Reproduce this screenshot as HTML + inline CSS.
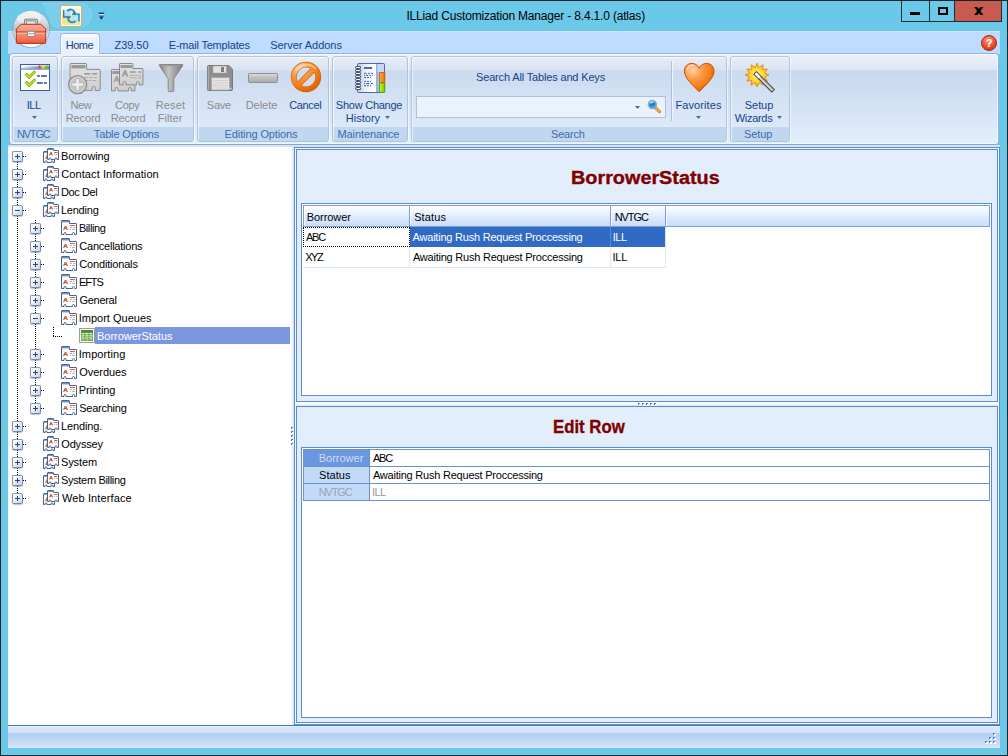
<!DOCTYPE html>
<html><head><meta charset="utf-8"><title>ILLiad Customization Manager</title>
<style>
html,body{margin:0;padding:0}
body{width:1008px;height:756px;overflow:hidden;position:relative;background:#6ac9e8;font-family:"Liberation Sans", sans-serif;font-size:11px}
div,span,svg{box-sizing:border-box}
svg{position:absolute;overflow:visible}
</style></head><body>
<div style="position:absolute;left:0px;top:0px;width:1008px;height:1px;background:#1d2326"></div>
<div style="position:absolute;left:0px;top:0px;width:1px;height:756px;background:#1d2326"></div>
<div style="position:absolute;left:0px;top:755px;width:1008px;height:1px;background:#1d2326"></div>
<div style="position:absolute;left:1007px;top:0px;width:1px;height:756px;background:#1d2326"></div>
<span style="position:absolute;left:406.4px;top:8px;height:16px;line-height:16px;font-size:12px;font-weight:normal;color:#000;white-space:pre;letter-spacing:-0.178px;">ILLiad Customization Manager - 8.4.1.0 (atlas)</span>
<div style="position:absolute;left:901px;top:1px;width:101px;height:21px;border:1px solid #1e2b33;border-top:none;background:#6ac9e8"></div>
<div style="position:absolute;left:955px;top:1px;width:46px;height:20px;background:#c75b50"></div>
<div style="position:absolute;left:929px;top:1px;width:1px;height:20px;background:#1e2b33"></div>
<div style="position:absolute;left:954px;top:1px;width:1px;height:20px;background:#1e2b33"></div>
<div style="position:absolute;left:910px;top:12px;width:10px;height:3px;background:#000"></div>
<div style="position:absolute;left:938px;top:7px;width:10px;height:8px;border:2px solid #000"></div>
<svg style="left:973px;top:7px;overflow:hidden" width="12" height="8" viewBox="0 0 12 8"><path d="M2 -1 L9.600 9 M9.600 -1 L2 9" stroke="#000" stroke-width="2.500" fill="none"/></svg>
<div style="position:absolute;left:8px;top:31px;width:992px;height:23px;background:#bfdbff"></div>
<span style="position:absolute;left:114.469px;top:38px;height:15px;line-height:15px;font-size:11px;font-weight:normal;color:#15428b;white-space:pre;letter-spacing:-0.0444px;">Z39.50</span>
<span style="position:absolute;left:168.768px;top:38px;height:15px;line-height:15px;font-size:11px;font-weight:normal;color:#15428b;white-space:pre;letter-spacing:-0.2013px;">E-mail Templates</span>
<span style="position:absolute;left:270.204px;top:38px;height:15px;line-height:15px;font-size:11px;font-weight:normal;color:#15428b;white-space:pre;letter-spacing:-0.0366px;">Server Addons</span>
<div style="position:absolute;left:981px;top:35px;width:16px;height:16px;border-radius:50%;background:radial-gradient(circle at 45% 30%,#ff9a7a 0%,#ee4a2a 55%,#c2230f 100%);border:1px solid #b3200e"></div>
<span style="position:absolute;left:989px;top:36px;height:15px;line-height:15px;font-size:11px;font-weight:bold;color:#fff;white-space:pre;transform:translateX(-50%);transform-origin:center center;">?</span>
<div style="position:absolute;left:9px;top:53px;width:990px;height:92px;border:1px solid #8fb1e4;border-bottom-color:#94a4bc;border-radius:4px;background:linear-gradient(#edf2fa 0px,#dbe5f3 16px,#c7d8ed 17px,#e1eefc 89px,#e2fbfd 89px,#e2fbfd 90px);box-shadow:inset 1px 1px 0 rgba(255,255,255,.7),inset -1px 0 0 rgba(255,255,255,.7)"></div>
<div style="position:absolute;left:61px;top:53px;width:38px;height:2px;background:#ecf1fa"></div>
<div style="position:absolute;left:60px;top:33px;width:40px;height:20px;border:1px solid #9bbdee;border-bottom:none;border-radius:4px 4px 0 0;background:linear-gradient(#ffffff 0px,#edf3fc 4px,#e8eff9 12px,#ecf1fa 20px);box-shadow:inset 1px 1px 0 rgba(255,255,255,.9),inset -1px 0 0 rgba(255,255,255,.9)"></div>
<div style="position:absolute;left:59px;top:53px;width:1px;height:1px;background:#a9c6f0"></div>
<div style="position:absolute;left:100px;top:53px;width:1px;height:1px;background:#a9c6f0"></div>
<div style="position:absolute;left:8px;top:31px;width:992px;height:1px;background:#d2e5ff"></div>
<span style="position:absolute;left:65.873px;top:38px;height:15px;line-height:15px;font-size:11px;font-weight:normal;color:#15428b;white-space:pre;letter-spacing:-0.5462px;">Home</span>
<div style="position:absolute;left:8px;top:145px;width:992px;height:2px;background:#d6e3f4"></div>
<div style="position:absolute;left:12px;top:56px;width:46px;height:86px;border:1px solid #b1c4dc;border-radius:3px;background:linear-gradient(#e6edf8 0px,#d9e3f2 13px,#cbdaee 14px,#dce9f9 70px,#c1d7ef 70px,#c1d7ef 84px);box-shadow:inset 1px 1px 0 rgba(255,255,255,.6), 1px 0 0 rgba(255,255,255,.55)"></div>
<div style="position:absolute;left:61px;top:56px;width:133px;height:86px;border:1px solid #b1c4dc;border-radius:3px;background:linear-gradient(#e6edf8 0px,#d9e3f2 13px,#cbdaee 14px,#dce9f9 70px,#c1d7ef 70px,#c1d7ef 84px);box-shadow:inset 1px 1px 0 rgba(255,255,255,.6), 1px 0 0 rgba(255,255,255,.55)"></div>
<div style="position:absolute;left:197px;top:56px;width:132px;height:86px;border:1px solid #b1c4dc;border-radius:3px;background:linear-gradient(#e6edf8 0px,#d9e3f2 13px,#cbdaee 14px,#dce9f9 70px,#c1d7ef 70px,#c1d7ef 84px);box-shadow:inset 1px 1px 0 rgba(255,255,255,.6), 1px 0 0 rgba(255,255,255,.55)"></div>
<div style="position:absolute;left:332px;top:56px;width:76px;height:86px;border:1px solid #b1c4dc;border-radius:3px;background:linear-gradient(#e6edf8 0px,#d9e3f2 13px,#cbdaee 14px,#dce9f9 70px,#c1d7ef 70px,#c1d7ef 84px);box-shadow:inset 1px 1px 0 rgba(255,255,255,.6), 1px 0 0 rgba(255,255,255,.55)"></div>
<div style="position:absolute;left:411px;top:56px;width:316px;height:86px;border:1px solid #b1c4dc;border-radius:3px;background:linear-gradient(#e6edf8 0px,#d9e3f2 13px,#cbdaee 14px,#dce9f9 70px,#c1d7ef 70px,#c1d7ef 84px);box-shadow:inset 1px 1px 0 rgba(255,255,255,.6), 1px 0 0 rgba(255,255,255,.55)"></div>
<div style="position:absolute;left:730px;top:56px;width:60px;height:86px;border:1px solid #b1c4dc;border-radius:3px;background:linear-gradient(#e6edf8 0px,#d9e3f2 13px,#cbdaee 14px,#dce9f9 70px,#c1d7ef 70px,#c1d7ef 84px);box-shadow:inset 1px 1px 0 rgba(255,255,255,.6), 1px 0 0 rgba(255,255,255,.55)"></div>
<span style="position:absolute;left:16.886px;top:127px;height:15px;line-height:15px;font-size:11px;font-weight:normal;color:#3e6aaa;white-space:pre;letter-spacing:-1.1408px;">NVTGC</span>
<span style="position:absolute;left:93.836px;top:127px;height:15px;line-height:15px;font-size:11px;font-weight:normal;color:#3e6aaa;white-space:pre;letter-spacing:-0.1463px;">Table Options</span>
<span style="position:absolute;left:224.595px;top:127px;height:15px;line-height:15px;font-size:11px;font-weight:normal;color:#3e6aaa;white-space:pre;letter-spacing:-0.1128px;">Editing Options</span>
<span style="position:absolute;left:337.557px;top:127px;height:15px;line-height:15px;font-size:11px;font-weight:normal;color:#3e6aaa;white-space:pre;letter-spacing:-0.1091px;">Maintenance</span>
<span style="position:absolute;left:551.113px;top:127px;height:15px;line-height:15px;font-size:11px;font-weight:normal;color:#3e6aaa;white-space:pre;letter-spacing:-0.2298px;">Search</span>
<span style="position:absolute;left:744.058px;top:127px;height:15px;line-height:15px;font-size:11px;font-weight:normal;color:#3e6aaa;white-space:pre;letter-spacing:-0.0791px;">Setup</span>
<span style="position:absolute;left:26.874px;top:98px;height:15px;line-height:15px;font-size:11px;font-weight:normal;color:#15428b;white-space:pre;letter-spacing:-0.5561px;">ILL</span>
<svg style="left:32px;top:116px" width="5" height="3" viewBox="0 0 5 3"><path d="M0 0h5l-2.5 3z" fill="#46699e"/></svg>
<span style="position:absolute;left:70.382px;top:98px;height:15px;line-height:15px;font-size:11px;font-weight:normal;color:#8d8b8a;white-space:pre;letter-spacing:-0.2925px;">New</span>
<span style="position:absolute;left:65.712px;top:111px;height:15px;line-height:15px;font-size:11px;font-weight:normal;color:#8d8b8a;white-space:pre;letter-spacing:-0.1203px;">Record</span>
<span style="position:absolute;left:115.120px;top:98px;height:15px;line-height:15px;font-size:11px;font-weight:normal;color:#8d8b8a;white-space:pre;letter-spacing:-0.3515px;">Copy</span>
<span style="position:absolute;left:110.746px;top:111px;height:15px;line-height:15px;font-size:11px;font-weight:normal;color:#8d8b8a;white-space:pre;letter-spacing:-0.1272px;">Record</span>
<span style="position:absolute;left:155.685px;top:98px;height:15px;line-height:15px;font-size:11px;font-weight:normal;color:#8d8b8a;white-space:pre;letter-spacing:0.1371px;">Reset</span>
<span style="position:absolute;left:157.712px;top:111px;height:15px;line-height:15px;font-size:11px;font-weight:normal;color:#8d8b8a;white-space:pre;letter-spacing:0.0456px;">Filter</span>
<span style="position:absolute;left:206.815px;top:98px;height:15px;line-height:15px;font-size:11px;font-weight:normal;color:#8d8b8a;white-space:pre;letter-spacing:-0.2351px;">Save</span>
<span style="position:absolute;left:245.712px;top:98px;height:15px;line-height:15px;font-size:11px;font-weight:normal;color:#8d8b8a;white-space:pre;letter-spacing:-0.0391px;">Delete</span>
<span style="position:absolute;left:289.179px;top:98px;height:15px;line-height:15px;font-size:11px;font-weight:normal;color:#15428b;white-space:pre;letter-spacing:-0.3343px;">Cancel</span>
<span style="position:absolute;left:335.833px;top:98px;height:15px;line-height:15px;font-size:11px;font-weight:normal;color:#15428b;white-space:pre;letter-spacing:-0.2446px;">Show Change</span>
<span style="position:absolute;left:345.700px;top:111px;height:15px;line-height:15px;font-size:11px;font-weight:normal;color:#15428b;white-space:pre;letter-spacing:0.0344px;">History</span>
<svg style="left:385px;top:116px" width="5" height="3" viewBox="0 0 5 3"><path d="M0 0h5l-2.5 3z" fill="#46699e"/></svg>
<span style="position:absolute;left:475.988px;top:70px;height:15px;line-height:15px;font-size:11px;font-weight:normal;color:#15428b;white-space:pre;letter-spacing:-0.1548px;">Search All Tables and Keys</span>
<span style="position:absolute;left:675.536px;top:98px;height:15px;line-height:15px;font-size:11px;font-weight:normal;color:#15428b;white-space:pre;letter-spacing:0.0773px;">Favorites</span>
<svg style="left:696px;top:116px" width="5" height="3" viewBox="0 0 5 3"><path d="M0 0h5l-2.5 3z" fill="#46699e"/></svg>
<span style="position:absolute;left:744.823px;top:98px;height:15px;line-height:15px;font-size:11px;font-weight:normal;color:#15428b;white-space:pre;letter-spacing:-0.0676px;">Setup</span>
<span style="position:absolute;left:734.737px;top:111px;height:15px;line-height:15px;font-size:11px;font-weight:normal;color:#15428b;white-space:pre;letter-spacing:-0.2982px;">Wizards</span>
<svg style="left:777px;top:116px" width="5" height="3" viewBox="0 0 5 3"><path d="M0 0h5l-2.5 3z" fill="#46699e"/></svg>
<div style="position:absolute;left:416px;top:96px;width:250px;height:22px;border:1px solid #abc1de;background:#eaf2fb"></div>
<svg style="left:635px;top:106px" width="5" height="3" viewBox="0 0 5 3"><path d="M0 0h5l-2.5 3z" fill="#46699e"/></svg>
<div style="position:absolute;left:636px;top:109px;width:3px;height:1px;background:rgba(255,255,255,.9)"></div>
<div style="position:absolute;left:671px;top:61px;width:1px;height:60px;background:#a9c0e0"></div>
<div style="position:absolute;left:672px;top:61px;width:1px;height:60px;background:#eef4fc"></div>
<div style="position:absolute;left:8px;top:147px;width:284px;height:578px;background:#fff"></div>
<div style="position:absolute;left:17px;top:162px;width:1px;height:331px;background:repeating-linear-gradient(#000 0 1px,transparent 1px 2px)"></div>
<div style="position:absolute;left:35px;top:220px;width:1px;height:183px;background:repeating-linear-gradient(#000 0 1px,transparent 1px 2px)"></div>
<div style="position:absolute;left:53px;top:327px;width:1px;height:10px;background:repeating-linear-gradient(#000 0 1px,transparent 1px 2px)"></div>
<div style="position:absolute;left:53px;top:336px;width:9px;height:1px;background:repeating-linear-gradient(90deg,#000 0 1px,transparent 1px 2px)"></div>
<div style="position:absolute;left:23px;top:156px;width:4px;height:1px;background:repeating-linear-gradient(90deg,#000 0 1px,transparent 1px 2px)"></div>
<div style="position:absolute;left:12px;top:151px;width:11px;height:11px;border:1px solid #8395b3;border-right-color:#74879f;border-bottom-color:#74879f;border-radius:2px;background:linear-gradient(135deg,#ffffff 15%,#e4eaf6 55%,#c6d2ea 100%);box-shadow:0 1px 1px rgba(110,130,165,.45)"></div>
<div style="position:absolute;left:15px;top:156px;width:5px;height:1px;background:#2f4770"></div>
<div style="position:absolute;left:17px;top:154px;width:1px;height:5px;background:#2f4770"></div>
<svg style="left:43px;top:147px" width="16" height="17" viewBox="0 0 16 17"><use href="#icfolders"/></svg>
<span style="position:absolute;left:60.937px;top:149px;height:15px;line-height:15px;font-size:11px;font-weight:normal;color:#000;white-space:pre;letter-spacing:-0.0877px;">Borrowing</span>
<div style="position:absolute;left:23px;top:174px;width:4px;height:1px;background:repeating-linear-gradient(90deg,#000 0 1px,transparent 1px 2px)"></div>
<div style="position:absolute;left:12px;top:169px;width:11px;height:11px;border:1px solid #8395b3;border-right-color:#74879f;border-bottom-color:#74879f;border-radius:2px;background:linear-gradient(135deg,#ffffff 15%,#e4eaf6 55%,#c6d2ea 100%);box-shadow:0 1px 1px rgba(110,130,165,.45)"></div>
<div style="position:absolute;left:15px;top:174px;width:5px;height:1px;background:#2f4770"></div>
<div style="position:absolute;left:17px;top:172px;width:1px;height:5px;background:#2f4770"></div>
<svg style="left:43px;top:165px" width="16" height="17" viewBox="0 0 16 17"><use href="#icfolders"/></svg>
<span style="position:absolute;left:61.327px;top:167px;height:15px;line-height:15px;font-size:11px;font-weight:normal;color:#000;white-space:pre;letter-spacing:0.0770px;">Contact Information</span>
<div style="position:absolute;left:23px;top:192px;width:4px;height:1px;background:repeating-linear-gradient(90deg,#000 0 1px,transparent 1px 2px)"></div>
<div style="position:absolute;left:12px;top:187px;width:11px;height:11px;border:1px solid #8395b3;border-right-color:#74879f;border-bottom-color:#74879f;border-radius:2px;background:linear-gradient(135deg,#ffffff 15%,#e4eaf6 55%,#c6d2ea 100%);box-shadow:0 1px 1px rgba(110,130,165,.45)"></div>
<div style="position:absolute;left:15px;top:192px;width:5px;height:1px;background:#2f4770"></div>
<div style="position:absolute;left:17px;top:190px;width:1px;height:5px;background:#2f4770"></div>
<svg style="left:43px;top:183px" width="16" height="17" viewBox="0 0 16 17"><use href="#icfolders"/></svg>
<span style="position:absolute;left:60.998px;top:185px;height:15px;line-height:15px;font-size:11px;font-weight:normal;color:#000;white-space:pre;letter-spacing:-0.3961px;">Doc Del</span>
<div style="position:absolute;left:23px;top:210px;width:4px;height:1px;background:repeating-linear-gradient(90deg,#000 0 1px,transparent 1px 2px)"></div>
<div style="position:absolute;left:12px;top:205px;width:11px;height:11px;border:1px solid #8395b3;border-right-color:#74879f;border-bottom-color:#74879f;border-radius:2px;background:linear-gradient(135deg,#ffffff 15%,#e4eaf6 55%,#c6d2ea 100%);box-shadow:0 1px 1px rgba(110,130,165,.45)"></div>
<div style="position:absolute;left:15px;top:210px;width:5px;height:1px;background:#2f4770"></div>
<svg style="left:43px;top:201px" width="16" height="17" viewBox="0 0 16 17"><use href="#icfolders"/></svg>
<span style="position:absolute;left:60.914px;top:203px;height:15px;line-height:15px;font-size:11px;font-weight:normal;color:#000;white-space:pre;letter-spacing:-0.2137px;">Lending</span>
<div style="position:absolute;left:41px;top:228px;width:4px;height:1px;background:repeating-linear-gradient(90deg,#000 0 1px,transparent 1px 2px)"></div>
<div style="position:absolute;left:30px;top:223px;width:11px;height:11px;border:1px solid #8395b3;border-right-color:#74879f;border-bottom-color:#74879f;border-radius:2px;background:linear-gradient(135deg,#ffffff 15%,#e4eaf6 55%,#c6d2ea 100%);box-shadow:0 1px 1px rgba(110,130,165,.45)"></div>
<div style="position:absolute;left:33px;top:228px;width:5px;height:1px;background:#2f4770"></div>
<div style="position:absolute;left:35px;top:226px;width:1px;height:5px;background:#2f4770"></div>
<svg style="left:61px;top:219px" width="16" height="17" viewBox="0 0 16 17"><use href="#icfolder"/></svg>
<span style="position:absolute;left:78.937px;top:221px;height:15px;line-height:15px;font-size:11px;font-weight:normal;color:#000;white-space:pre;letter-spacing:-0.4169px;">Billing</span>
<div style="position:absolute;left:41px;top:246px;width:4px;height:1px;background:repeating-linear-gradient(90deg,#000 0 1px,transparent 1px 2px)"></div>
<div style="position:absolute;left:30px;top:241px;width:11px;height:11px;border:1px solid #8395b3;border-right-color:#74879f;border-bottom-color:#74879f;border-radius:2px;background:linear-gradient(135deg,#ffffff 15%,#e4eaf6 55%,#c6d2ea 100%);box-shadow:0 1px 1px rgba(110,130,165,.45)"></div>
<div style="position:absolute;left:33px;top:246px;width:5px;height:1px;background:#2f4770"></div>
<div style="position:absolute;left:35px;top:244px;width:1px;height:5px;background:#2f4770"></div>
<svg style="left:61px;top:237px" width="16" height="17" viewBox="0 0 16 17"><use href="#icfolder"/></svg>
<span style="position:absolute;left:79.324px;top:239px;height:15px;line-height:15px;font-size:11px;font-weight:normal;color:#000;white-space:pre;letter-spacing:-0.2333px;">Cancellations</span>
<div style="position:absolute;left:41px;top:264px;width:4px;height:1px;background:repeating-linear-gradient(90deg,#000 0 1px,transparent 1px 2px)"></div>
<div style="position:absolute;left:30px;top:259px;width:11px;height:11px;border:1px solid #8395b3;border-right-color:#74879f;border-bottom-color:#74879f;border-radius:2px;background:linear-gradient(135deg,#ffffff 15%,#e4eaf6 55%,#c6d2ea 100%);box-shadow:0 1px 1px rgba(110,130,165,.45)"></div>
<div style="position:absolute;left:33px;top:264px;width:5px;height:1px;background:#2f4770"></div>
<div style="position:absolute;left:35px;top:262px;width:1px;height:5px;background:#2f4770"></div>
<svg style="left:61px;top:255px" width="16" height="17" viewBox="0 0 16 17"><use href="#icfolder"/></svg>
<span style="position:absolute;left:79.333px;top:257px;height:15px;line-height:15px;font-size:11px;font-weight:normal;color:#000;white-space:pre;letter-spacing:-0.1800px;">Conditionals</span>
<div style="position:absolute;left:41px;top:282px;width:4px;height:1px;background:repeating-linear-gradient(90deg,#000 0 1px,transparent 1px 2px)"></div>
<div style="position:absolute;left:30px;top:277px;width:11px;height:11px;border:1px solid #8395b3;border-right-color:#74879f;border-bottom-color:#74879f;border-radius:2px;background:linear-gradient(135deg,#ffffff 15%,#e4eaf6 55%,#c6d2ea 100%);box-shadow:0 1px 1px rgba(110,130,165,.45)"></div>
<div style="position:absolute;left:33px;top:282px;width:5px;height:1px;background:#2f4770"></div>
<div style="position:absolute;left:35px;top:280px;width:1px;height:5px;background:#2f4770"></div>
<svg style="left:61px;top:273px" width="16" height="17" viewBox="0 0 16 17"><use href="#icfolder"/></svg>
<span style="position:absolute;left:78.937px;top:275px;height:15px;line-height:15px;font-size:11px;font-weight:normal;color:#000;white-space:pre;letter-spacing:-1.0933px;">EFTS</span>
<div style="position:absolute;left:41px;top:300px;width:4px;height:1px;background:repeating-linear-gradient(90deg,#000 0 1px,transparent 1px 2px)"></div>
<div style="position:absolute;left:30px;top:295px;width:11px;height:11px;border:1px solid #8395b3;border-right-color:#74879f;border-bottom-color:#74879f;border-radius:2px;background:linear-gradient(135deg,#ffffff 15%,#e4eaf6 55%,#c6d2ea 100%);box-shadow:0 1px 1px rgba(110,130,165,.45)"></div>
<div style="position:absolute;left:33px;top:300px;width:5px;height:1px;background:#2f4770"></div>
<div style="position:absolute;left:35px;top:298px;width:1px;height:5px;background:#2f4770"></div>
<svg style="left:61px;top:291px" width="16" height="17" viewBox="0 0 16 17"><use href="#icfolder"/></svg>
<span style="position:absolute;left:79.524px;top:293px;height:15px;line-height:15px;font-size:11px;font-weight:normal;color:#000;white-space:pre;letter-spacing:-0.2926px;">General</span>
<div style="position:absolute;left:41px;top:318px;width:4px;height:1px;background:repeating-linear-gradient(90deg,#000 0 1px,transparent 1px 2px)"></div>
<div style="position:absolute;left:30px;top:313px;width:11px;height:11px;border:1px solid #8395b3;border-right-color:#74879f;border-bottom-color:#74879f;border-radius:2px;background:linear-gradient(135deg,#ffffff 15%,#e4eaf6 55%,#c6d2ea 100%);box-shadow:0 1px 1px rgba(110,130,165,.45)"></div>
<div style="position:absolute;left:33px;top:318px;width:5px;height:1px;background:#2f4770"></div>
<svg style="left:61px;top:309px" width="16" height="17" viewBox="0 0 16 17"><use href="#icfolder"/></svg>
<span style="position:absolute;left:78.674px;top:311px;height:15px;line-height:15px;font-size:11px;font-weight:normal;color:#000;white-space:pre;letter-spacing:0.0121px;">Import Queues</span>
<div style="position:absolute;left:95px;top:327px;width:195px;height:17px;background:#7a96df"></div>
<svg style="left:79px;top:328px" width="16" height="15" viewBox="0 0 16 15"><use href="#ictable"/></svg>
<span style="position:absolute;left:97.039px;top:329px;height:15px;line-height:15px;font-size:11px;font-weight:normal;color:#fff;white-space:pre;letter-spacing:-0.0275px;">BorrowerStatus</span>
<div style="position:absolute;left:41px;top:354px;width:4px;height:1px;background:repeating-linear-gradient(90deg,#000 0 1px,transparent 1px 2px)"></div>
<div style="position:absolute;left:30px;top:349px;width:11px;height:11px;border:1px solid #8395b3;border-right-color:#74879f;border-bottom-color:#74879f;border-radius:2px;background:linear-gradient(135deg,#ffffff 15%,#e4eaf6 55%,#c6d2ea 100%);box-shadow:0 1px 1px rgba(110,130,165,.45)"></div>
<div style="position:absolute;left:33px;top:354px;width:5px;height:1px;background:#2f4770"></div>
<div style="position:absolute;left:35px;top:352px;width:1px;height:5px;background:#2f4770"></div>
<svg style="left:61px;top:345px" width="16" height="17" viewBox="0 0 16 17"><use href="#icfolder"/></svg>
<span style="position:absolute;left:78.710px;top:347px;height:15px;line-height:15px;font-size:11px;font-weight:normal;color:#000;white-space:pre;letter-spacing:0.1099px;">Importing</span>
<div style="position:absolute;left:41px;top:372px;width:4px;height:1px;background:repeating-linear-gradient(90deg,#000 0 1px,transparent 1px 2px)"></div>
<div style="position:absolute;left:30px;top:367px;width:11px;height:11px;border:1px solid #8395b3;border-right-color:#74879f;border-bottom-color:#74879f;border-radius:2px;background:linear-gradient(135deg,#ffffff 15%,#e4eaf6 55%,#c6d2ea 100%);box-shadow:0 1px 1px rgba(110,130,165,.45)"></div>
<div style="position:absolute;left:33px;top:372px;width:5px;height:1px;background:#2f4770"></div>
<div style="position:absolute;left:35px;top:370px;width:1px;height:5px;background:#2f4770"></div>
<svg style="left:61px;top:363px" width="16" height="17" viewBox="0 0 16 17"><use href="#icfolder"/></svg>
<span style="position:absolute;left:79.374px;top:365px;height:15px;line-height:15px;font-size:11px;font-weight:normal;color:#000;white-space:pre;letter-spacing:-0.0739px;">Overdues</span>
<div style="position:absolute;left:41px;top:390px;width:4px;height:1px;background:repeating-linear-gradient(90deg,#000 0 1px,transparent 1px 2px)"></div>
<div style="position:absolute;left:30px;top:385px;width:11px;height:11px;border:1px solid #8395b3;border-right-color:#74879f;border-bottom-color:#74879f;border-radius:2px;background:linear-gradient(135deg,#ffffff 15%,#e4eaf6 55%,#c6d2ea 100%);box-shadow:0 1px 1px rgba(110,130,165,.45)"></div>
<div style="position:absolute;left:33px;top:390px;width:5px;height:1px;background:#2f4770"></div>
<div style="position:absolute;left:35px;top:388px;width:1px;height:5px;background:#2f4770"></div>
<svg style="left:61px;top:381px" width="16" height="17" viewBox="0 0 16 17"><use href="#icfolder"/></svg>
<span style="position:absolute;left:78.874px;top:383px;height:15px;line-height:15px;font-size:11px;font-weight:normal;color:#000;white-space:pre;letter-spacing:-0.0974px;">Printing</span>
<div style="position:absolute;left:41px;top:408px;width:4px;height:1px;background:repeating-linear-gradient(90deg,#000 0 1px,transparent 1px 2px)"></div>
<div style="position:absolute;left:30px;top:403px;width:11px;height:11px;border:1px solid #8395b3;border-right-color:#74879f;border-bottom-color:#74879f;border-radius:2px;background:linear-gradient(135deg,#ffffff 15%,#e4eaf6 55%,#c6d2ea 100%);box-shadow:0 1px 1px rgba(110,130,165,.45)"></div>
<div style="position:absolute;left:33px;top:408px;width:5px;height:1px;background:#2f4770"></div>
<div style="position:absolute;left:35px;top:406px;width:1px;height:5px;background:#2f4770"></div>
<svg style="left:61px;top:399px" width="16" height="17" viewBox="0 0 16 17"><use href="#icfolder"/></svg>
<span style="position:absolute;left:79.271px;top:401px;height:15px;line-height:15px;font-size:11px;font-weight:normal;color:#000;white-space:pre;letter-spacing:-0.2515px;">Searching</span>
<div style="position:absolute;left:23px;top:426px;width:4px;height:1px;background:repeating-linear-gradient(90deg,#000 0 1px,transparent 1px 2px)"></div>
<div style="position:absolute;left:12px;top:421px;width:11px;height:11px;border:1px solid #8395b3;border-right-color:#74879f;border-bottom-color:#74879f;border-radius:2px;background:linear-gradient(135deg,#ffffff 15%,#e4eaf6 55%,#c6d2ea 100%);box-shadow:0 1px 1px rgba(110,130,165,.45)"></div>
<div style="position:absolute;left:15px;top:426px;width:5px;height:1px;background:#2f4770"></div>
<div style="position:absolute;left:17px;top:424px;width:1px;height:5px;background:#2f4770"></div>
<svg style="left:43px;top:417px" width="16" height="17" viewBox="0 0 16 17"><use href="#icfolders"/></svg>
<span style="position:absolute;left:60.932px;top:419px;height:15px;line-height:15px;font-size:11px;font-weight:normal;color:#000;white-space:pre;letter-spacing:-0.1000px;">Lending.</span>
<div style="position:absolute;left:23px;top:444px;width:4px;height:1px;background:repeating-linear-gradient(90deg,#000 0 1px,transparent 1px 2px)"></div>
<div style="position:absolute;left:12px;top:439px;width:11px;height:11px;border:1px solid #8395b3;border-right-color:#74879f;border-bottom-color:#74879f;border-radius:2px;background:linear-gradient(135deg,#ffffff 15%,#e4eaf6 55%,#c6d2ea 100%);box-shadow:0 1px 1px rgba(110,130,165,.45)"></div>
<div style="position:absolute;left:15px;top:444px;width:5px;height:1px;background:#2f4770"></div>
<div style="position:absolute;left:17px;top:442px;width:1px;height:5px;background:#2f4770"></div>
<svg style="left:43px;top:435px" width="16" height="17" viewBox="0 0 16 17"><use href="#icfolders"/></svg>
<span style="position:absolute;left:61.319px;top:437px;height:15px;line-height:15px;font-size:11px;font-weight:normal;color:#000;white-space:pre;letter-spacing:-0.1886px;">Odyssey</span>
<div style="position:absolute;left:23px;top:462px;width:4px;height:1px;background:repeating-linear-gradient(90deg,#000 0 1px,transparent 1px 2px)"></div>
<div style="position:absolute;left:12px;top:457px;width:11px;height:11px;border:1px solid #8395b3;border-right-color:#74879f;border-bottom-color:#74879f;border-radius:2px;background:linear-gradient(135deg,#ffffff 15%,#e4eaf6 55%,#c6d2ea 100%);box-shadow:0 1px 1px rgba(110,130,165,.45)"></div>
<div style="position:absolute;left:15px;top:462px;width:5px;height:1px;background:#2f4770"></div>
<div style="position:absolute;left:17px;top:460px;width:1px;height:5px;background:#2f4770"></div>
<svg style="left:43px;top:453px" width="16" height="17" viewBox="0 0 16 17"><use href="#icfolders"/></svg>
<span style="position:absolute;left:60.972px;top:455px;height:15px;line-height:15px;font-size:11px;font-weight:normal;color:#000;white-space:pre;letter-spacing:-0.1057px;">System</span>
<div style="position:absolute;left:23px;top:480px;width:4px;height:1px;background:repeating-linear-gradient(90deg,#000 0 1px,transparent 1px 2px)"></div>
<div style="position:absolute;left:12px;top:475px;width:11px;height:11px;border:1px solid #8395b3;border-right-color:#74879f;border-bottom-color:#74879f;border-radius:2px;background:linear-gradient(135deg,#ffffff 15%,#e4eaf6 55%,#c6d2ea 100%);box-shadow:0 1px 1px rgba(110,130,165,.45)"></div>
<div style="position:absolute;left:15px;top:480px;width:5px;height:1px;background:#2f4770"></div>
<div style="position:absolute;left:17px;top:478px;width:1px;height:5px;background:#2f4770"></div>
<svg style="left:43px;top:471px" width="16" height="17" viewBox="0 0 16 17"><use href="#icfolders"/></svg>
<span style="position:absolute;left:60.954px;top:473px;height:15px;line-height:15px;font-size:11px;font-weight:normal;color:#000;white-space:pre;letter-spacing:-0.3172px;">System Billing</span>
<div style="position:absolute;left:23px;top:498px;width:4px;height:1px;background:repeating-linear-gradient(90deg,#000 0 1px,transparent 1px 2px)"></div>
<div style="position:absolute;left:12px;top:493px;width:11px;height:11px;border:1px solid #8395b3;border-right-color:#74879f;border-bottom-color:#74879f;border-radius:2px;background:linear-gradient(135deg,#ffffff 15%,#e4eaf6 55%,#c6d2ea 100%);box-shadow:0 1px 1px rgba(110,130,165,.45)"></div>
<div style="position:absolute;left:15px;top:498px;width:5px;height:1px;background:#2f4770"></div>
<div style="position:absolute;left:17px;top:496px;width:1px;height:5px;background:#2f4770"></div>
<svg style="left:43px;top:489px" width="16" height="17" viewBox="0 0 16 17"><use href="#icfolders"/></svg>
<span style="position:absolute;left:61.957px;top:491px;height:15px;line-height:15px;font-size:11px;font-weight:normal;color:#000;white-space:pre;letter-spacing:0.1234px;">Web Interface</span>
<div style="position:absolute;left:291px;top:147px;width:3px;height:578px;background:linear-gradient(90deg,#ffffff,#e3edfb 50%,#cfe0f8)"></div>
<div style="position:absolute;left:291px;top:427px;width:2px;height:2px;background:#4f7ec9"></div>
<div style="position:absolute;left:292px;top:428px;width:2px;height:2px;background:#ffffff"></div>
<div style="position:absolute;left:291px;top:431px;width:2px;height:2px;background:#4f7ec9"></div>
<div style="position:absolute;left:292px;top:432px;width:2px;height:2px;background:#ffffff"></div>
<div style="position:absolute;left:291px;top:435px;width:2px;height:2px;background:#4f7ec9"></div>
<div style="position:absolute;left:292px;top:436px;width:2px;height:2px;background:#ffffff"></div>
<div style="position:absolute;left:291px;top:439px;width:2px;height:2px;background:#4f7ec9"></div>
<div style="position:absolute;left:292px;top:440px;width:2px;height:2px;background:#ffffff"></div>
<div style="position:absolute;left:291px;top:443px;width:2px;height:2px;background:#4f7ec9"></div>
<div style="position:absolute;left:292px;top:444px;width:2px;height:2px;background:#ffffff"></div>
<div style="position:absolute;left:294px;top:147px;width:706px;height:578px;border:1px solid #5b8bd0;background:#f4f8fe"></div>
<div style="position:absolute;left:296px;top:149px;width:702px;height:253px;border:1px solid #5b8bd0;background:#e3eefd"></div>
<div style="position:absolute;left:296px;top:402px;width:702px;height:4px;background:linear-gradient(#fff,#fff 50%,#cfe0fa)"></div>
<div style="position:absolute;left:296px;top:406px;width:702px;height:317px;border:1px solid #5b8bd0;background:#e3eefd"></div>
<div style="position:absolute;left:638px;top:403px;width:2px;height:2px;background:#4f7ec9"></div>
<div style="position:absolute;left:639px;top:404px;width:2px;height:2px;background:#ffffff"></div>
<div style="position:absolute;left:642px;top:403px;width:2px;height:2px;background:#4f7ec9"></div>
<div style="position:absolute;left:643px;top:404px;width:2px;height:2px;background:#ffffff"></div>
<div style="position:absolute;left:646px;top:403px;width:2px;height:2px;background:#4f7ec9"></div>
<div style="position:absolute;left:647px;top:404px;width:2px;height:2px;background:#ffffff"></div>
<div style="position:absolute;left:650px;top:403px;width:2px;height:2px;background:#4f7ec9"></div>
<div style="position:absolute;left:651px;top:404px;width:2px;height:2px;background:#ffffff"></div>
<div style="position:absolute;left:654px;top:403px;width:2px;height:2px;background:#4f7ec9"></div>
<div style="position:absolute;left:655px;top:404px;width:2px;height:2px;background:#ffffff"></div>
<span style="position:absolute;left:570.7px;top:167px;height:22px;line-height:22px;font-size:18px;font-weight:bold;color:#800000;white-space:pre;transform:scaleX(1.1012);transform-origin:left center;-webkit-text-stroke:.35px #800000;">BorrowerStatus</span>
<span style="position:absolute;left:552.6px;top:416px;height:22px;line-height:22px;font-size:18px;font-weight:bold;color:#800000;white-space:pre;transform:scaleX(0.9312);transform-origin:left center;-webkit-text-stroke:.35px #800000;">Edit Row</span>
<div style="position:absolute;left:301px;top:203px;width:691px;height:193px;border:1px solid #5b8bd0;background:#fff"></div>
<div style="position:absolute;left:303px;top:205px;width:687px;height:22px;border:1px solid #7d9fd8;background:linear-gradient(#ffffff 0%,#f0f6fe 25%,#dbe8fc 60%,#c9dcfa 100%)"></div>
<div style="position:absolute;left:409px;top:205px;width:1px;height:22px;background:#7d9fd8"></div>
<div style="position:absolute;left:410px;top:206px;width:1px;height:20px;background:rgba(255,255,255,.8)"></div>
<div style="position:absolute;left:611px;top:206px;width:1px;height:20px;background:rgba(255,255,255,.8)"></div>
<div style="position:absolute;left:666px;top:206px;width:1px;height:20px;background:rgba(255,255,255,.8)"></div>
<div style="position:absolute;left:304px;top:206px;width:1px;height:20px;background:rgba(255,255,255,.8)"></div>
<div style="position:absolute;left:610px;top:205px;width:1px;height:22px;background:#7d9fd8"></div>
<div style="position:absolute;left:665px;top:205px;width:1px;height:22px;background:#7d9fd8"></div>
<span style="position:absolute;left:306.727px;top:210px;height:15px;line-height:15px;font-size:11px;font-weight:normal;color:#000;white-space:pre;letter-spacing:-0.0487px;">Borrower</span>
<span style="position:absolute;left:414.166px;top:210px;height:15px;line-height:15px;font-size:11px;font-weight:normal;color:#000;white-space:pre;letter-spacing:0.1310px;">Status</span>
<span style="position:absolute;left:614.635px;top:210px;height:15px;line-height:15px;font-size:11px;font-weight:normal;color:#000;white-space:pre;letter-spacing:-1.0684px;">NVTGC</span>
<div style="position:absolute;left:410px;top:227px;width:255px;height:20px;background:#316ac5"></div>
<div style="position:absolute;left:610px;top:227px;width:1px;height:20px;background:#5b87d4"></div>
<div style="position:absolute;left:409px;top:247px;width:1px;height:21px;background:#dbe6f7"></div>
<div style="position:absolute;left:610px;top:247px;width:1px;height:21px;background:#dbe6f7"></div>
<div style="position:absolute;left:665px;top:227px;width:1px;height:41px;background:#dbe6f7"></div>
<div style="position:absolute;left:303px;top:267px;width:363px;height:1px;background:#dbe6f7"></div>
<div style="position:absolute;left:303px;top:227px;width:107px;height:20px;border:1px dotted #000"></div>
<span style="position:absolute;left:305.919px;top:230px;height:15px;line-height:15px;font-size:11px;font-weight:normal;color:#000;white-space:pre;letter-spacing:-1.2244px;">ABC</span>
<span style="position:absolute;left:412.612px;top:230px;height:15px;line-height:15px;font-size:11px;font-weight:normal;color:#fff;white-space:pre;letter-spacing:-0.2213px;">Awaiting Rush Request Proccessing</span>
<span style="position:absolute;left:612.729px;top:230px;height:15px;line-height:15px;font-size:11px;font-weight:normal;color:#fff;white-space:pre;letter-spacing:-0.4321px;">ILL</span>
<span style="position:absolute;left:305.178px;top:250px;height:15px;line-height:15px;font-size:11px;font-weight:normal;color:#000;white-space:pre;letter-spacing:-1.4852px;">XYZ</span>
<span style="position:absolute;left:412.919px;top:250px;height:15px;line-height:15px;font-size:11px;font-weight:normal;color:#000;white-space:pre;letter-spacing:-0.2209px;">Awaiting Rush Request Proccessing</span>
<span style="position:absolute;left:612.434px;top:250px;height:15px;line-height:15px;font-size:11px;font-weight:normal;color:#000;white-space:pre;letter-spacing:-0.1954px;">ILL</span>
<div style="position:absolute;left:301px;top:447px;width:691px;height:271px;border:1px solid #5b8bd0;background:#fff"></div>
<div style="position:absolute;left:303px;top:449px;width:687px;height:52px;border:1px solid #6a90d0;background:#fff"></div>
<div style="position:absolute;left:304px;top:450px;width:65px;height:16px;background:#6b96e0"></div>
<div style="position:absolute;left:304px;top:467px;width:65px;height:16px;background:#c3d9f8"></div>
<div style="position:absolute;left:304px;top:484px;width:65px;height:16px;background:#c3d9f8"></div>
<div style="position:absolute;left:369px;top:449px;width:1px;height:52px;background:#6a90d0"></div>
<div style="position:absolute;left:303px;top:466px;width:687px;height:1px;background:#6a90d0"></div>
<div style="position:absolute;left:303px;top:483px;width:687px;height:1px;background:#6a90d0"></div>
<span style="position:absolute;left:318.728px;top:451px;height:15px;line-height:15px;font-size:11px;font-weight:normal;color:#cfdcf5;white-space:pre;letter-spacing:-0.0050px;">Borrower</span>
<span style="position:absolute;left:318.979px;top:468px;height:15px;line-height:15px;font-size:11px;font-weight:normal;color:#000;white-space:pre;letter-spacing:0.0720px;">Status</span>
<span style="position:absolute;left:318.857px;top:485px;height:15px;line-height:15px;font-size:11px;font-weight:normal;color:#9aa3b5;white-space:pre;letter-spacing:-1.1756px;">NVTGC</span>
<span style="position:absolute;left:372.919px;top:451px;height:15px;line-height:15px;font-size:11px;font-weight:normal;color:#000;white-space:pre;letter-spacing:-1.2199px;">ABC</span>
<span style="position:absolute;left:372.919px;top:468px;height:15px;line-height:15px;font-size:11px;font-weight:normal;color:#000;white-space:pre;letter-spacing:-0.2209px;">Awaiting Rush Request Proccessing</span>
<span style="position:absolute;left:372.067px;top:485px;height:15px;line-height:15px;font-size:11px;font-weight:normal;color:#9a9a9a;white-space:pre;letter-spacing:-0.6396px;">ILL</span>
<div style="position:absolute;left:8px;top:725px;width:992px;height:23px;background:linear-gradient(#4a78b8 0px,#4a78b8 1px,#f0f5fc 1px,#dbe7f9 2px,#d2e2f8 8px,#b0cef4 8px,#b6d2f4 12px,#cbddf5 18px,#d8e5f6 23px)"></div>
<div style="position:absolute;left:993px;top:733px;width:2px;height:2px;background:#4f7ec9"></div>
<div style="position:absolute;left:994px;top:734px;width:2px;height:2px;background:#fff"></div>
<div style="position:absolute;left:989px;top:737px;width:2px;height:2px;background:#4f7ec9"></div>
<div style="position:absolute;left:990px;top:738px;width:2px;height:2px;background:#fff"></div>
<div style="position:absolute;left:993px;top:737px;width:2px;height:2px;background:#4f7ec9"></div>
<div style="position:absolute;left:994px;top:738px;width:2px;height:2px;background:#fff"></div>
<div style="position:absolute;left:985px;top:741px;width:2px;height:2px;background:#4f7ec9"></div>
<div style="position:absolute;left:986px;top:742px;width:2px;height:2px;background:#fff"></div>
<div style="position:absolute;left:989px;top:741px;width:2px;height:2px;background:#4f7ec9"></div>
<div style="position:absolute;left:990px;top:742px;width:2px;height:2px;background:#fff"></div>
<div style="position:absolute;left:993px;top:741px;width:2px;height:2px;background:#4f7ec9"></div>
<div style="position:absolute;left:994px;top:742px;width:2px;height:2px;background:#fff"></div>
<svg width="0" height="0" style="left:0;top:0"><defs>
<g id="icfolder">
<path d="M0.5 2.0 q0 -.5 .5 -.5 H8.0 q.5 0 .5 .5 V4.5 H15.0 q.5 0 .5 .5 V15.5 H13.5 v-1.0 a1.0 1.0 0 0 0 -2.0 0 v1.0 H5.0 v-1.0 a1.0 1.0 0 0 0 -2.0 0 v1.0 H0.5 z" fill="#fff" stroke="#4a6290" stroke-width="1"/>
<rect x="1" y="2" width="7" height="1" fill="#6f8fd6"/><rect x="1" y="3" width="7" height="1" fill="#c3d1ee"/>
<path d="M2 11 l1.800 -4 h1.400 l1.800 4 h-1.300 l-.4 -1 h-1.600 l-.4 1z M4.050 9 h.9 l-.45 -1.100z" fill="#c9562a" fill-rule="evenodd"/>
<rect x="9" y="6" width="5" height="1" fill="#e2622e"/>
<rect x="9" y="8" width="2" height="1" fill="#a9b6cf"/><rect x="12" y="8" width="2" height="1" fill="#a9b6cf"/>
<rect x="9" y="10" width="1" height="1" fill="#a9b6cf"/><rect x="11" y="10" width="3" height="1" fill="#a9b6cf"/>
</g>
<g id="icfolders">
<path d="M0.5 5.0 q0 -.5 .5 -.5 H5.0 q.5 0 .5 .5 V6.5 H11.0 q.5 0 .5 .5 V15.5 H9.9 v-0.8 a0.9 0.9 0 0 0 -1.8 0 v0.8 H3.9 v-0.8 a0.9 0.9 0 0 0 -1.8 0 v0.8 H0.5 z" fill="#fff" stroke="#4a6290" stroke-width="1"/>
<rect x="1" y="5" width="4" height="1" fill="#8aa6dc"/>
<path d="M2 12 l1.300 -3.400 h.9 v3.400z" fill="#c9562a" opacity=".8"/>
<path d="M4.5 2.0 q0 -.5 .5 -.5 H10.0 q.5 0 .5 .5 V3.5 H15.0 q.5 0 .5 .5 V12.5 H13.9 v-0.8 a0.9 0.9 0 0 0 -1.8 0 v0.8 H7.9 v-0.8 a0.9 0.9 0 0 0 -1.8 0 v0.8 H4.5 z" fill="#fff" stroke="#4a6290" stroke-width="1"/>
<rect x="5" y="2" width="5" height="1" fill="#6f8fd6"/>
<path d="M6 8.500 l1.500 -3.500 h1 l1.500 3.500 h-1.100 l-.25 -.7 h-1.300 l-.25 .7z" fill="#c9562a"/>
<rect x="11" y="5" width="3.500" height="1" fill="#e2622e"/>
<rect x="11" y="7" width="1.200" height="1" fill="#a9b6cf"/><rect x="13" y="7" width="1.500" height="1" fill="#a9b6cf"/>
</g>
<g id="ictable">
<rect x="0.5" y="0.5" width="15" height="14" fill="#fff" stroke="#9c9c9c"/>
<rect x="2" y="2" width="12" height="11" fill="#62a044"/>
<rect x="2" y="2" width="12" height="2.300" fill="#4b8a2e"/>
<g fill="#e0f0cc"><rect x="2.6" y="5.0" width="2.8" height="1.3"/><rect x="2.6" y="7.2" width="2.8" height="1.3"/><rect x="2.6" y="9.4" width="2.8" height="1.3"/><rect x="2.6" y="11.6" width="2.8" height="0.6"/><rect x="6.3" y="5.0" width="3.2" height="1.3"/><rect x="6.3" y="7.2" width="3.2" height="1.3"/><rect x="6.3" y="9.4" width="3.2" height="1.3"/><rect x="6.3" y="11.6" width="3.2" height="0.6"/><rect x="10.4" y="5.0" width="3.0" height="1.3"/><rect x="10.4" y="7.2" width="3.0" height="1.3"/><rect x="10.4" y="9.4" width="3.0" height="1.3"/><rect x="10.4" y="11.6" width="3.0" height="0.6"/></g>
</g>
</defs></svg>
<svg width="0" height="0" style="left:0;top:0"><defs>
<linearGradient id="gOrb" x1="0" y1="0" x2="0" y2="1"><stop offset="0" stop-color="#eceff2"/><stop offset=".3" stop-color="#d9dde3"/><stop offset=".5" stop-color="#b9c0c9"/><stop offset=".68" stop-color="#dfe3e8"/><stop offset=".85" stop-color="#fbfcfd"/><stop offset="1" stop-color="#ffffff"/></linearGradient>
<linearGradient id="gRed" x1="0" y1="0" x2="0" y2="1"><stop offset="0" stop-color="#f7977c"/><stop offset=".5" stop-color="#f17a5c"/><stop offset="1" stop-color="#ec5636"/></linearGradient>
<linearGradient id="gRedLid" x1="0" y1="0" x2="0" y2="1"><stop offset="0" stop-color="#f9ae98"/><stop offset="1" stop-color="#f58e72"/></linearGradient>
<linearGradient id="gGrey" x1="0" y1="0" x2="0" y2="1"><stop offset="0" stop-color="#d4d4d4"/><stop offset="1" stop-color="#a9a9a9"/></linearGradient>
<linearGradient id="gCard" x1="0" y1="0" x2="0" y2="1"><stop offset="0" stop-color="#e2e2e2"/><stop offset="1" stop-color="#cfcfcf"/></linearGradient>
<linearGradient id="gFun" x1="0" y1="0" x2="1" y2="0"><stop offset="0" stop-color="#7e7e7e"/><stop offset=".4" stop-color="#c4c4c4"/><stop offset=".6" stop-color="#a8a8a8"/><stop offset="1" stop-color="#7a7a7a"/></linearGradient>
<radialGradient id="gOr" cx=".35" cy=".25" r=".9"><stop offset="0" stop-color="#ffd0a0"/><stop offset=".35" stop-color="#fb9a3c"/><stop offset=".75" stop-color="#f27a14"/><stop offset="1" stop-color="#d85c00"/></radialGradient>
<radialGradient id="gHeart" cx=".3" cy=".25" r=".85"><stop offset="0" stop-color="#ffd9b0"/><stop offset=".3" stop-color="#fca050"/><stop offset=".7" stop-color="#f47c18"/><stop offset="1" stop-color="#d05800"/></radialGradient>
<linearGradient id="gPage" x1="0" y1="0" x2="1" y2="0"><stop offset="0" stop-color="#b8c2d6"/><stop offset=".25" stop-color="#e6eaf2"/><stop offset=".6" stop-color="#ffffff"/></linearGradient>
<linearGradient id="gOrT" x1="0" y1="0" x2="1" y2="0"><stop offset="0" stop-color="#ffb040"/><stop offset="1" stop-color="#f07000"/></linearGradient>
<linearGradient id="gGrT" x1="0" y1="0" x2="1" y2="0"><stop offset="0" stop-color="#c8ff20"/><stop offset="1" stop-color="#78c800"/></linearGradient>
<radialGradient id="gStar" cx=".5" cy=".5" r=".5"><stop offset="0" stop-color="#fff6a0"/><stop offset=".6" stop-color="#ffd428"/><stop offset="1" stop-color="#f8a010"/></radialGradient>
<linearGradient id="gTitleB" x1="0" y1="0" x2="1" y2="0"><stop offset="0" stop-color="#ffffff"/><stop offset=".5" stop-color="#8aa4dc"/><stop offset="1" stop-color="#5a7cc8"/></linearGradient>
</defs></svg>
<svg style="left:11px;top:9px" width="40" height="40" viewBox="11 9 40 40">
<circle cx="31.2" cy="29.300" r="18.900" fill="#8490a0" opacity=".65"/>
<circle cx="31.2" cy="29" r="18.200" fill="url(#gOrb)"/>
<ellipse cx="29" cy="18" rx="12" ry="6.500" fill="#fff" opacity=".4"/>
<path d="M25.200 25 v-3.800 q0 -1.200 1.200 -1.200 h9.200 q1.200 0 1.200 1.200 v3.800" fill="none" stroke="#585858" stroke-width="2.600"/>
<path d="M25.200 25 v-3.800 q0 -1.200 1.200 -1.200 h9.200 q1.200 0 1.200 1.200 v3.800" fill="none" stroke="#f4f4f4" stroke-width="1.100"/>
<path d="M21.200 24.300 h19.600 l4.900 4.600 v3.400 h-29.400 v-3.400 z" fill="url(#gRedLid)" stroke="#b3200f" stroke-width=".9" stroke-linejoin="round"/>
<rect x="16.300" y="32.200" width="29.400" height="11.200" rx=".8" fill="url(#gRed)" stroke="#b3200f" stroke-width=".9"/>
<rect x="16.800" y="32.500" width="28.400" height="1.100" fill="#fdc8b4" opacity=".9"/>
<rect x="27.400" y="31.200" width="7.400" height="5.400" rx="1" fill="#f6f6f6" stroke="#7c7c7c" stroke-width=".9"/>
<rect x="28" y="33.200" width="6.200" height="1.100" fill="#a8a8a8"/>
</svg>
<svg style="left:40px;top:2px" width="56" height="28" viewBox="40 2 56 28">
<path d="M43 3.500 H80 a11.600 11.600 0 0 1 0 23.200 H56 C50 26.700 50 14 43 3.500z" fill="#9adaf0" opacity=".35" stroke="#c4e9f6" stroke-width=".8"/>
</svg>
<div style="position:absolute;left:60px;top:5px;width:22px;height:22px;border:1px solid #c9b272;border-radius:2px;background:linear-gradient(#fbf8e6 0px,#f6efc8 8px,#f5e594 9px,#f2e08a 16px,#f6ecb8 20px);box-shadow:inset 0 0 0 1px rgba(255,255,255,.75)"></div>
<svg style="left:62px;top:7px" width="18" height="18" viewBox="62 7 18 18">
<rect x="63.500" y="10.300" width="7" height="6.600" fill="#aee0f6"/>
<path d="M63.700 10 v7 h7" fill="none" stroke="#1a7cc6" stroke-width="1.300"/>
<path d="M64.600 10.600 l4 4" stroke="#e8f8ff" stroke-width="1" opacity=".9"/>
<rect x="72" y="14.200" width="6.800" height="7" fill="#aee0f6"/>
<path d="M72 14.200 h7 v7.300" fill="none" stroke="#1a7cc6" stroke-width="1.300"/>
<path d="M73.500 20.600 l4 -4" stroke="#e8f8ff" stroke-width="1" opacity=".9"/>
<path d="M67.200 11.200 a4.200 4.200 0 0 1 7.400 1.600" fill="none" stroke="#1f8fd6" stroke-width="1.900"/>
<path d="M72.600 12.200 h3.600 l-1.400 2.800z" fill="#176fb4"/>
<path d="M68.300 17.400 a4 4 0 0 0 7 3.400" fill="none" stroke="#1f8fd6" stroke-width="1.900"/>
<path d="M66.600 18.300 l1.800 -2.800 l1.800 2.800z" fill="#1f8fd6"/>
</svg>
<svg style="left:98px;top:12px" width="7" height="9" viewBox="0 0 7 9">
<rect x="0.600" y="0.600" width="5.600" height="1.500" fill="#172f86"/><rect x="0.600" y="2.100" width="5.600" height=".9" fill="#fff" opacity=".8"/>
<path d="M0.400 3.600 h6 l-3 4.200z" fill="#172f86"/><path d="M0.400 3.600 h6 l-.6 .8 h-4.800z" fill="#eaf6ff" opacity=".5"/>
</svg>
<svg style="left:19px;top:62px" width="32" height="32" viewBox="19 62 32 32">
<rect x="20.5" y="64.5" width="29" height="26" fill="#fff" stroke="#3b5ea8" stroke-width="1"/>
<rect x="21" y="65" width="28" height="3.600" fill="url(#gTitleB)"/>
<rect x="21" y="65" width="28" height="1.400" fill="#fff" opacity=".85"/>
<rect x="21" y="68.600" width="28" height=".9" fill="#3b5ea8"/>
<circle cx="39.400" cy="67" r="1.700" fill="#e8584a"/><circle cx="43.200" cy="67" r="1.700" fill="#f2cf1c"/><circle cx="47" cy="67" r="1.700" fill="#7dc21e"/>
<path d="M25 74.600 l1.700 -1.500 l2.400 2.400 l5.200 -4.700 l1.300 1.500 l-6.500 6.600z" fill="#bfe212" stroke="#6d9a08" stroke-width=".8" stroke-linejoin="round"/>
<path d="M25 82.600 l1.700 -1.500 l2.400 2.400 l5.200 -4.700 l1.300 1.500 l-6.500 6.600z" fill="#bfe212" stroke="#6d9a08" stroke-width=".8" stroke-linejoin="round"/>
<rect x="37" y="75" width="2.800" height="2" fill="#5977b8"/><rect x="41" y="75" width="5.800" height="2" fill="#5977b8"/>
<rect x="37" y="82" width="5.800" height="2" fill="#5977b8"/><rect x="44" y="82" width="2.800" height="2" fill="#5977b8"/>
</svg>
<svg style="left:66px;top:62px" width="36" height="34" viewBox="66 62 36 34">
<path d="M70.700 63.500 h15.300 q.6 0 .6 .6 v5.300 h12.800 q.8 0 .8 .8 v19.600 q0 .6 -.6 .6 h-4.400 v-2.400 q0 -1.500 -1.500 -1.500 q-1.500 0 -1.500 1.500 v2.400 h-21.500 q-.6 0 -.6 -.6 v-25.700 q0 -.6 .6 -.6z" fill="url(#gCard)" stroke="#8b8b8b" stroke-width="1"/>
<rect x="71.500" y="65" width="14" height="3.400" fill="#9a9a9a"/>
<rect x="84" y="73" width="6.500" height="1.600" fill="#9c9c9c"/><rect x="92" y="73" width="5" height="1.600" fill="#9c9c9c"/>
<rect x="85" y="77" width="3.400" height="1" fill="#a8a8a8"/><rect x="89.400" y="77" width="3.400" height="1" fill="#a8a8a8"/><rect x="94" y="77" width="2.600" height="1" fill="#a8a8a8"/>
<rect x="85" y="80" width="3.400" height="1" fill="#a8a8a8"/><rect x="89.400" y="80" width="2" height="1" fill="#a8a8a8"/><rect x="93" y="80" width="3.600" height="1" fill="#a8a8a8"/>
<circle cx="77.600" cy="84.600" r="9" fill="#c6c6c6" stroke="#8e8e8e" stroke-width="1.400"/>
<circle cx="77.600" cy="84.600" r="7.600" fill="none" stroke="#d8d8d8" stroke-width=".8"/>
<path d="M76 78.800 h3.200 v4.200 h4.200 v3.200 h-4.200 v4.200 h-3.200 v-4.200 h-4.200 v-3.200 h4.200z" fill="#f0f0f0" stroke="#a0a0a0" stroke-width=".5"/>
</svg>
<svg style="left:108px;top:62px" width="38" height="32" viewBox="108 62 38 32">
<path d="M111.5 70.1 q0 -.6 .6 -.6 H118.9 q.6 0 .6 .6 V74.5 H134.3 q.6 0 .6 .6 V90.9 H131.4 v-2 a1.4 1.4 0 0 0 -2.8 0 v2 H118.0 v-2 a1.4 1.4 0 0 0 -2.8 0 v2 H111.5 z" fill="url(#gCard)" stroke="#8b8b8b"/>
<rect x="112.400" y="71" width="7" height="3" fill="#9a9a9a"/>
<path d="M113.400 82.500 l2.400 -6.600 h1.800 l2.400 6.600 h-1.700 l-.5 -1.500 h-2.300 l-.5 1.500z" fill="#a2a2a2"/>
<path d="M119.5 64.1 q0 -.6 .6 -.6 H132.3 q.6 0 .6 .6 V68.5 H142.3 q.6 0 .6 .6 V84.9 H139.20000000000002 v-2 a1.4 1.4 0 0 0 -2.8 0 v2 H126.0 v-2 a1.4 1.4 0 0 0 -2.8 0 v2 H119.5 z" fill="url(#gCard)" stroke="#8b8b8b"/>
<rect x="120.500" y="65" width="11.400" height="3" fill="#9a9a9a"/>
<path d="M121.600 76.700 l2.500 -6.800 h1.900 l2.500 6.800 h-1.800 l-.5 -1.500 h-2.300 l-.5 1.500z" fill="#a2a2a2"/>
<rect x="130" y="71.200" width="5.600" height="1.700" fill="#a0a0a0"/><rect x="138.400" y="71.200" width="2.600" height="1.700" fill="#a0a0a0"/>
<rect x="130" y="74.800" width="4" height="1" fill="#ababab"/><rect x="135" y="74.800" width="2.600" height="1" fill="#ababab"/><rect x="138.600" y="74.800" width="2.200" height="1" fill="#ababab"/>
<rect x="130" y="77.200" width="2.600" height="1" fill="#ababab"/><rect x="133.600" y="77.200" width="3" height="1" fill="#ababab"/><rect x="138.200" y="77.200" width="2.600" height="1" fill="#ababab"/>
</svg>
<svg style="left:157px;top:62px" width="28" height="32" viewBox="157 62 28 32">
<path d="M159.600 64.500 h22.800 q.8 .2 .3 1 l-8.900 13.300 v11.700 q0 1 -1 1 h-3.600 q-1 0 -1 -1 v-11.700 l-8.900 -13.300 q-.5 -.8 .3 -1z" fill="url(#gFun)" stroke="#808080" stroke-width=".9"/>
<path d="M160.500 65.500 h21" stroke="#9a9a9a" stroke-width="1.200"/>
</svg>
<svg style="left:205px;top:63px" width="30" height="30" viewBox="205 63 30 30">
<path d="M208.500 65.500 h20.300 l3.700 3.700 v20.300 q0 1 -1 1 h-23 q-1 0 -1 -1 v-23 q0 -1 1 -1z" fill="#8e8e8e" stroke="#7a7a7a" stroke-width="1"/>
<path d="M208.300 66.300 v23.400" stroke="#b4b4b4" stroke-width="1"/>
<rect x="213" y="66" width="13.400" height="7" fill="#e2e2e2" stroke="#a0a0a0" stroke-width=".5"/>
<rect x="221" y="67" width="3" height="5" fill="#7c7c7c"/>
<rect x="211.500" y="77.700" width="18" height="12.300" fill="#e4e4e4" stroke="#a6a6a6" stroke-width=".6"/>
<path d="M213 80.500 h15 M213 83 h15 M213 85.500 h15 M213 88 h15" stroke="#cacaca" stroke-width=".8"/>
<rect x="229.800" y="87.800" width="1.400" height="1.400" fill="#e8e8e8"/>
</svg>
<svg style="left:247px;top:72px" width="32" height="12" viewBox="247 72 32 12">
<rect x="248.500" y="73.500" width="29" height="9" rx=".8" fill="url(#gGrey)" stroke="#8f8f8f" stroke-width="1"/>
<rect x="249.400" y="74.400" width="27.200" height="1" fill="#e2e2e2" opacity=".8"/>
</svg>
<svg style="left:290px;top:61px" width="32" height="32" viewBox="290 61 32 32">
<defs><radialGradient id="gOr2" gradientUnits="userSpaceOnUse" cx="300" cy="68" r="27"><stop offset="0" stop-color="#ffd4a4"/><stop offset=".3" stop-color="#fca048"/><stop offset=".65" stop-color="#f47e16"/><stop offset="1" stop-color="#d65a00"/></radialGradient></defs>
<circle cx="306" cy="77" r="12.300" fill="none" stroke="#d2600a" stroke-width="5.800"/>
<path d="M298.600 84.400 L313.400 69.600" stroke="#d2600a" stroke-width="5.600"/>
<circle cx="306" cy="77" r="12.300" fill="none" stroke="url(#gOr2)" stroke-width="4.600"/>
<path d="M298.300 84.700 L313.700 69.300" stroke="url(#gOr2)" stroke-width="4.200"/>
<path d="M295.300 71 a12.600 12.600 0 0 1 20.500 -2" stroke="#ffe6cc" stroke-width="1.500" fill="none" opacity=".7"/>
</svg>
<svg style="left:354px;top:62px" width="32" height="32" viewBox="354 62 32 32">
<rect x="357.500" y="63.500" width="27" height="29" rx="1" fill="url(#gPage)" stroke="#4a69a8" stroke-width="1"/>
<rect x="376.300" y="64" width="7.700" height="28" fill="#a9c5f2"/>
<rect x="376.300" y="64" width="1.200" height="28" fill="#7fa4e4"/>
<rect x="377.500" y="64" width="6.500" height="8" fill="#c4d8f8"/>
<rect x="379.500" y="72.500" width="5.300" height="10" rx=".6" fill="url(#gOrT)" stroke="#d45a00" stroke-width=".9"/>
<rect x="379.500" y="83" width="5.300" height="9.300" rx=".6" fill="url(#gGrT)" stroke="#5a9a00" stroke-width=".9"/>
<rect x="364" y="67" width="8.200" height="1.900" fill="#3f63c4"/>
<g fill="#4a6ec8">
<rect x="364" y="72.800" width="2.600" height="1.100"/><rect x="368" y="72.800" width="1.800" height="1.100"/><rect x="371" y="72.800" width="2" height="1.100"/>
<rect x="364" y="74.900" width="1" height="1.100"/><rect x="366" y="74.900" width="2.200" height="1.100"/><rect x="369.400" y="74.900" width="1.800" height="1.100"/><rect x="372.200" y="74.900" width="1" height="1.100"/>
<rect x="364" y="77" width="2" height="1.100"/><rect x="367" y="77" width="2" height="1.100"/><rect x="370" y="77" width="1.200" height="1.100"/>
<rect x="364" y="80.900" width="2" height="1.100"/><rect x="367" y="80.900" width="2" height="1.100"/><rect x="370" y="80.900" width="1.200" height="1.100"/>
<rect x="364" y="83" width="1" height="1.100"/><rect x="366" y="83" width="3.400" height="1.100"/><rect x="370.800" y="83" width="2.200" height="1.100"/>
<rect x="364" y="85.100" width="2" height="1.100"/><rect x="367" y="85.100" width="2" height="1.100"/><rect x="370" y="85.100" width="1.200" height="1.100"/>
</g>
<rect x="355.200" y="66.20" width="5.800" height="2.600" rx="1.300" fill="#2c3d66"/><rect x="356.000" y="67.00" width="4.200" height="1" rx=".5" fill="#f6f8fb"/><rect x="355.200" y="69.20" width="5.800" height="2.600" rx="1.300" fill="#2c3d66"/><rect x="356.000" y="70.00" width="4.200" height="1" rx=".5" fill="#f6f8fb"/><rect x="355.200" y="72.20" width="5.800" height="2.600" rx="1.300" fill="#2c3d66"/><rect x="356.000" y="73.00" width="4.200" height="1" rx=".5" fill="#f6f8fb"/><rect x="355.200" y="75.20" width="5.800" height="2.600" rx="1.300" fill="#2c3d66"/><rect x="356.000" y="76.00" width="4.200" height="1" rx=".5" fill="#f6f8fb"/><rect x="355.200" y="78.20" width="5.800" height="2.600" rx="1.300" fill="#2c3d66"/><rect x="356.000" y="79.00" width="4.200" height="1" rx=".5" fill="#f6f8fb"/><rect x="355.200" y="81.20" width="5.800" height="2.600" rx="1.300" fill="#2c3d66"/><rect x="356.000" y="82.00" width="4.200" height="1" rx=".5" fill="#f6f8fb"/><rect x="355.200" y="84.20" width="5.800" height="2.600" rx="1.300" fill="#2c3d66"/><rect x="356.000" y="85.00" width="4.200" height="1" rx=".5" fill="#f6f8fb"/><rect x="355.200" y="87.20" width="5.800" height="2.600" rx="1.300" fill="#2c3d66"/><rect x="356.000" y="88.00" width="4.200" height="1" rx=".5" fill="#f6f8fb"/>
</svg>
<svg style="left:683px;top:62px" width="32" height="32" viewBox="683 62 32 32">
<path d="M699.200 68.200 c1.600 -3.400 4.700 -5 7.900 -4.800 c4.300 .3 7.100 3.800 6.900 8.200 c-.3 6.600 -8.200 13.400 -14.800 20.200 c-6.600 -6.800 -14.500 -13.600 -14.800 -20.200 c-.2 -4.400 2.600 -7.900 6.900 -8.200 c3.200 -.2 6.300 1.400 7.900 4.800z" fill="url(#gHeart)" stroke="#c85200" stroke-width="1"/>
<path d="M687.200 70 c.3 -3.400 3.400 -5.400 6.400 -4.600" stroke="#ffe8d0" stroke-width="1.500" fill="none" opacity=".8" stroke-linecap="round"/>
</svg>
<svg style="left:743px;top:61px" width="34" height="34" viewBox="743 61 34 34">
<polygon points="757.10,63.10 759.12,67.47 763.05,64.69 762.62,69.48 767.41,69.05 764.63,72.98 769.00,75.00 764.63,77.02 767.41,80.95 762.62,80.52 763.05,85.31 759.12,82.53 757.10,86.90 755.08,82.53 751.15,85.31 751.58,80.52 746.79,80.95 749.57,77.02 745.20,75.00 749.57,72.98 746.79,69.05 751.58,69.48 751.15,64.69 755.08,67.47" fill="url(#gStar)" stroke="#e58a0c" stroke-width=".9" stroke-linejoin="round"/>
<path d="M754.800 72.600 L773.400 91.200" stroke="#4a4a4a" stroke-width="4.600" stroke-linecap="butt"/>
<path d="M755.600 73.400 L772.600 90.400" stroke="#d8d8d8" stroke-width="2.200"/>
<path d="M755.600 73.400 L759.600 77.400" stroke="#ffffff" stroke-width="2.400"/>
<path d="M760.600 78.400 L772.600 90.400" stroke="#9c9c9c" stroke-width="1" transform="translate(.7,-.7)"/>
</svg>
<svg style="left:646px;top:98px" width="18" height="18" viewBox="646 98 18 18">
<path d="M655.400 107.600 L659.500 111.700" stroke="#c98a2a" stroke-width="3.100" stroke-linecap="round"/>
<path d="M655.400 107.400 L659.300 111.300" stroke="#f0b656" stroke-width="1.400" stroke-linecap="round"/>
<circle cx="652.400" cy="104.600" r="4" fill="#2c9ee6" stroke="#9aa6c4" stroke-width="1.500"/>
<path d="M650.200 103.300 a2.600 2.600 0 0 1 3.400 -1.200" stroke="#bfe8ff" stroke-width="1.200" fill="none"/>
<circle cx="651.300" cy="105" r="1.100" fill="#1668b8"/><circle cx="653.900" cy="104.200" r="1" fill="#1668b8"/>
</svg>
</body></html>
